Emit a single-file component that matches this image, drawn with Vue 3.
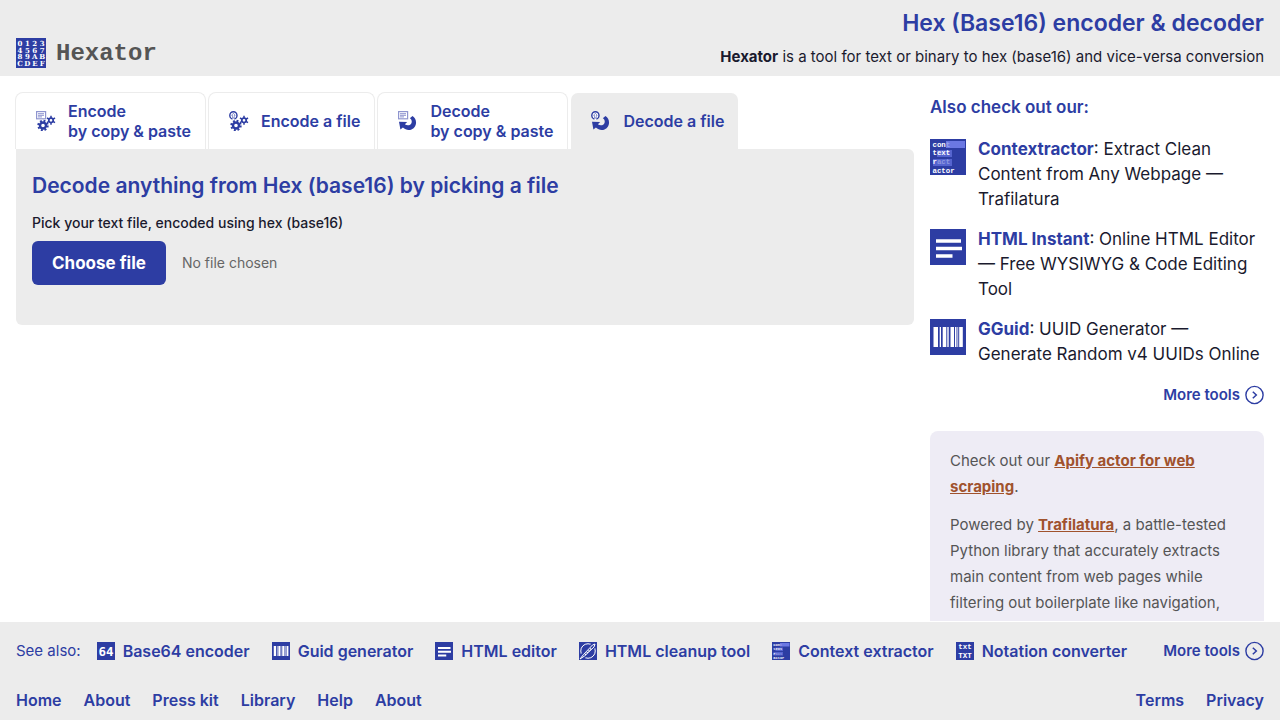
<script setup>
import { ref } from 'vue';

const activeTab = ref(3);
const fileInput = ref(null);
const fileName = ref('No file chosen');

const tabs = [
  { icon: 'encode-text', lines: ['Encode', 'by copy & paste'] },
  { icon: 'encode-file', lines: ['Encode a file'] },
  { icon: 'decode-text', lines: ['Decode', 'by copy & paste'] },
  { icon: 'decode-file', lines: ['Decode a file'] },
];

const tools = [
  { icon: 'context', name: 'Contextractor', text: 'Extract Clean Content from Any Webpage — Trafilatura' },
  { icon: 'html', name: 'HTML Instant', text: 'Online HTML Editor — Free WYSIWYG & Code Editing Tool' },
  { icon: 'guid', name: 'GGuid', text: 'UUID Generator — Generate Random v4 UUIDs Online' },
];

const seeAlso = [
  { icon: 'base64', name: 'Base64 encoder' },
  { icon: 'guid', name: 'Guid generator' },
  { icon: 'html', name: 'HTML editor' },
  { icon: 'cleanup', name: 'HTML cleanup tool' },
  { icon: 'context', name: 'Context extractor' },
  { icon: 'notation', name: 'Notation converter' },
];

const siteLinks = ['Home', 'About', 'Press kit', 'Library', 'Help', 'About'];
const legalLinks = ['Terms', 'Privacy'];
const hexRows = ['0123', '4567', '89AB', 'CDEF'];

function onFile(e) {
  const file = e.target.files[0];
  fileName.value = file ? file.name : 'No file chosen';
}
</script>

<template>
  <div class="page">
    <!-- shared icon shapes -->
    <svg class="sprite" aria-hidden="true">
      <symbol id="sheet" viewBox="0 0 20 20">
        <rect x="0.6" y="0.6" width="9" height="7.2" fill="#fff" stroke="#8f95cf" stroke-width="1.2" />
        <path d="M2 2.7h6M2 4.3h6M2 5.9h4" stroke="#7f86c9" stroke-width="0.9" />
      </symbol>
      <symbol id="upload" viewBox="0 0 20 20">
        <circle cx="4.4" cy="4.4" r="3.6" fill="#fff" stroke="#2d3da3" stroke-width="1.4" />
        <path d="M4.4 2.2L2.6 4.4h.9v2.400h1.800V4.400h.9z" fill="#fff" stroke="#2d3da3" stroke-width="0.5" />
        <path d="M3.400 7.400h2v1.600h-2z" fill="#fff" />
      </symbol>
      <symbol id="gears" viewBox="0 0 20 20">
        <circle cx="7" cy="14.5" r="3" fill="none" stroke="#2d3da3" stroke-width="2.4" />
        <circle cx="7" cy="14.5" r="4.7" fill="none" stroke="#2d3da3" stroke-width="2" stroke-dasharray="1.9 1.79" />
        <circle cx="15" cy="9.3" r="2.2" fill="none" stroke="#2d3da3" stroke-width="1.7" />
        <path d="M15 4.800v2.200M15 11.6v2.200M11 7l2 1.200M17 10.400l2 1.200M19 7l-2 1.200M13 10.400l-2 1.200" stroke="#2d3da3" stroke-width="1.5" />
      </symbol>
      <symbol id="return" viewBox="0 0 20 20">
        <path d="M1 10.800l8.200.3-2.300 2.200c2.300 1.700 5.800 1.200 6.600-1.400.7-2.200-.2-3.800-1.700-4.600L14.500 5c2.700 2 4 4.600 3.400 8-1 5.800-8.300 8.300-13 3.600l-2.500 2z" fill="#2d3da3" />
      </symbol>

      <symbol id="encode-text" viewBox="0 0 20 20"><use href="#sheet" /><use href="#gears" /></symbol>
      <symbol id="encode-file" viewBox="0 0 20 20"><use href="#upload" /><use href="#gears" /></symbol>
      <symbol id="decode-text" viewBox="0 0 20 20"><use href="#sheet" /><use href="#return" /></symbol>
      <symbol id="decode-file" viewBox="0 0 20 20"><use href="#upload" /><use href="#return" /></symbol>

      <symbol id="context" viewBox="0 0 36 36">
        <rect width="36" height="36" fill="#2d3da3" />
        <rect x="16" y="2" width="19" height="7" fill="#6b78e3" />
        <rect x="7" y="11" width="15" height="7" fill="#5564cf" />
        <rect x="3" y="20" width="19" height="7" fill="#5564cf" />
        <g font-family="Liberation Mono, monospace" font-size="7.4" font-weight="700" fill="#fff">
          <text x="2.5" y="7.5">con<tspan fill="#9aa2e8">t</tspan></text>
          <text x="2.5" y="16.3">text</text>
          <text x="2.5" y="25.2">r<tspan fill="#8f98e0">act</tspan></text>
          <text x="2.5" y="34">actor</text>
        </g>
      </symbol>
      <symbol id="html" viewBox="0 0 36 36">
        <rect width="36" height="36" fill="#2d3da3" />
        <path d="M6 12h25M6 19.5h26M6 27h16.5" stroke="#fff" stroke-width="3.6" />
      </symbol>
      <symbol id="guid" viewBox="0 0 36 36">
        <rect width="36" height="36" fill="#2d3da3" />
        <path d="M3.500 8H8v20H3.500zM9.700 8H11v20H9.700zM12.700 8h3.600v20h-3.600zM17.300 8h1.400v20h-1.400zM20.500 8H24v20h-3.500zM25 8h1.500v20H25zM27.400 8h.8v20h-.8zM29.200 8h3.600v20h-3.600z" fill="#fff" />
      </symbol>
      <symbol id="base64" viewBox="0 0 36 36">
        <rect width="36" height="36" fill="#2d3da3" />
        <text x="18" y="27" text-anchor="middle" font-family="DejaVu Sans Mono, monospace" font-size="25" font-weight="700" fill="#fff">64</text>
      </symbol>
      <symbol id="cleanup" viewBox="0 0 36 36">
        <rect width="36" height="36" fill="#2d3da3" />
        <circle cx="18" cy="18" r="14.5" fill="none" stroke="#fff" stroke-width="2" />
        <path d="M4 32L32 4" stroke="#2d3da3" stroke-width="11" />
        <path d="M2 34l7-9L27 6l5-2-2 6-19 18z" fill="none" stroke="#fff" stroke-width="2" />
        <path d="M12 26L25 12" stroke="#fff" stroke-width="2.5" stroke-dasharray="3 2" />
      </symbol>
      <symbol id="notation" viewBox="0 0 36 36">
        <rect width="36" height="36" fill="#2d3da3" />
        <g font-family="Liberation Mono, monospace" font-size="15" font-weight="700" fill="#fff" text-anchor="middle">
          <text x="18" y="14">txt</text>
          <text x="18" y="31">TXT</text>
        </g>
      </symbol>
      <symbol id="more" viewBox="0 0 20 20">
        <circle cx="10.500" cy="10" r="8.600" fill="none" stroke="#2d3da3" stroke-width="1.4" />
        <path d="M8.800 6.8l3.500 3.2-3.500 3.2" fill="none" stroke="#2d3da3" stroke-width="1.5" />
      </symbol>
    </svg>

    <header class="header">
      <a class="logo" href="#">
        <svg class="logo-mark" viewBox="0 0 30 30" aria-hidden="true">
          <rect width="30" height="30" fill="#2d3da3" />
          <g v-for="(row, r) in hexRows" :key="row">
            <text v-for="(ch, c) in row" :key="ch" class="hex" :x="4 + c * 7.4" :y="7.6 + r * 6.9">{{ ch }}</text>
          </g>
        </svg>
        <span class="logo-text">Hexator</span>
      </a>
      <div class="intro">
        <h1>Hex (Base16) encoder &amp; decoder</h1>
        <p><strong>Hexator</strong> is a tool for text or binary to hex (base16) and vice-versa conversion</p>
      </div>
    </header>

    <div class="content">
      <main class="main">
        <nav class="tabs">
          <button
            v-for="(tab, i) in tabs"
            :key="tab.icon"
            type="button"
            class="tab"
            :class="{ active: activeTab === i }"
            @click="activeTab = i"
          >
            <svg class="tab-icon" aria-hidden="true"><use :href="'#' + tab.icon" /></svg>
            <span class="tab-label">
              <span v-for="line in tab.lines" :key="line" class="tab-line">{{ line }}</span>
            </span>
          </button>
        </nav>
        <section class="panel">
          <h2>Decode anything from Hex (base16) by picking a file</h2>
          <label class="pick-label" for="file">Pick your text file, encoded using hex (base16)</label>
          <div class="picker">
            <input id="file" ref="fileInput" type="file" hidden @change="onFile">
            <button type="button" class="choose" @click="fileInput.click()">Choose file</button>
            <span class="file-name">{{ fileName }}</span>
          </div>
        </section>
      </main>

      <aside class="aside">
        <h3>Also check out our:</h3>
        <ul class="tools">
          <li v-for="tool in tools" :key="tool.name" class="tool">
            <svg class="tool-icon" aria-hidden="true"><use :href="'#' + tool.icon" /></svg>
            <p><a href="#">{{ tool.name }}</a>: {{ tool.text }}</p>
          </li>
        </ul>
        <a class="more" href="#">More tools <svg class="more-icon" aria-hidden="true"><use href="#more" /></svg></a>
        <div class="note">
          <p>Check out our <a href="#">Apify actor for web scraping</a>.</p>
          <p>Powered by <a href="#">Trafilatura</a>, a battle-tested Python library that accurately extracts main content from web pages while filtering out boilerplate like navigation,</p>
        </div>
      </aside>
    </div>

    <footer class="footer">
      <div class="see-also">
        <span class="see-label">See also:</span>
        <a v-for="item in seeAlso" :key="item.name" class="see-link" href="#">
          <svg class="see-icon" aria-hidden="true"><use :href="'#' + item.icon" /></svg>{{ item.name }}
        </a>
        <a class="more end" href="#">More tools <svg class="more-icon" aria-hidden="true"><use href="#more" /></svg></a>
      </div>
      <nav class="site-nav">
        <a v-for="(link, i) in siteLinks" :key="i" href="#">{{ link }}</a>
        <span class="legal end">
          <a v-for="link in legalLinks" :key="link" href="#">{{ link }}</a>
        </span>
      </nav>
    </footer>
  </div>
</template>

<style>
body {
  margin: 0;
  background: #fff;
}
</style>

<style scoped>
.page {
  display: flex;
  flex-direction: column;
  height: 100vh;
  font-family: Inter, "Liberation Sans", sans-serif;
  font-size: 16px;
  line-height: 20px;
  color: #1a1a2e;
}

.page * {
  box-sizing: border-box;
}

.sprite {
  display: none;
}

h1, h2, h3, p, ul {
  margin: 0;
  padding: 0;
}

a {
  color: #2d3da3;
  font-weight: 600;
  text-decoration: none;
}

.header {
  display: flex;
  justify-content: space-between;
  align-items: flex-end;
  padding: 8px 16px;
  background: #ececec;
}

.logo {
  display: flex;
  align-items: flex-end;
  gap: 10px;
}

.logo-mark {
  width: 30px;
  height: 30px;
}

.hex {
  font-family: "DejaVu Serif", "Liberation Serif", serif;
  font-size: 7px;
  text-anchor: middle;
  fill: #fff;
}

.logo-text {
  font-family: "Courier New", "Liberation Mono", monospace;
  font-size: 24px;
  line-height: 28px;
  font-weight: 700;
  color: #555;
}

.intro {
  text-align: right;
}

h1 {
  font-size: 23px;
  line-height: 30px;
  font-weight: 600;
  color: #2d3da3;
}

.intro p {
  margin-top: 8px;
  font-size: 15px;
  line-height: 22px;
}

.content {
  display: flex;
  flex: 1;
  gap: 16px;
  min-height: 0;
  padding: 16px 16px 0;
  overflow: hidden;
}

.main {
  flex: 1;
  min-width: 0;
}

.tabs {
  display: flex;
  gap: 2px;
  margin-left: -1px;
}

.tab {
  display: flex;
  align-items: center;
  gap: 12px;
  min-height: 57px;
  padding: 0 14px 0 20px;
  border: 1px solid #ececec;
  border-bottom: 0;
  border-radius: 8px 8px 0 0;
  background: #fff;
  background-clip: padding-box;
  color: #2d3da3;
  font-family: inherit;
  font-size: 16px;
  line-height: 20px;
  font-weight: 600;
  text-align: left;
  cursor: pointer;
}

.tab.active {
  border-color: transparent;
  background-color: #ececec;
}

.tab-icon {
  width: 20px;
  height: 20px;
}

.tab-line {
  display: block;
}

.panel {
  padding: 20px 16px 40px;
  border-radius: 0 6px 6px 6px;
  background: #ececec;
}

h2 {
  font-size: 21px;
  line-height: 34px;
  font-weight: 600;
  color: #2d3da3;
}

.pick-label {
  display: block;
  margin: 10px 0 8px;
  font-size: 14px;
  line-height: 20px;
  font-weight: 500;
}

.picker {
  display: flex;
  align-items: center;
  gap: 16px;
}

.choose {
  padding: 10px 20px;
  border: 0;
  border-radius: 6px;
  background: #2d3da3;
  color: #fff;
  font-family: inherit;
  font-size: 17px;
  line-height: 24px;
  font-weight: 700;
  cursor: pointer;
}

.file-name {
  font-size: 14px;
  line-height: 22px;
  color: #666;
}

.aside {
  flex: 0 0 334px;
}

h3 {
  margin-bottom: 15px;
  font-size: 17px;
  line-height: 30px;
  font-weight: 600;
  color: #2d3da3;
}

.tools {
  display: flex;
  flex-direction: column;
  gap: 15px;
  list-style: none;
}

.tool {
  display: flex;
  gap: 12px;
  font-size: 17px;
  line-height: 25px;
}

.tool a,
.note a {
  font-weight: 700;
}

.tool-icon {
  flex: none;
  width: 36px;
  height: 36px;
  margin-top: 2px;
}

.more {
  display: flex;
  justify-content: flex-end;
  align-items: center;
  gap: 4px;
  font-size: 15px;
}

.aside .more {
  margin-top: 18px;
}

.more-icon {
  width: 20px;
  height: 20px;
}

.note {
  display: flex;
  flex-direction: column;
  gap: 12px;
  margin-top: 26px;
  padding: 17px 20px;
  border-radius: 8px;
  background: #eeecf5;
  color: #555;
  font-size: 15px;
  line-height: 26px;
}

.note a {
  color: #a0522d;
  text-decoration: underline;
}

.footer {
  padding: 16px 16px 8px;
  border-top: 1px solid #fff;
  background: #ececec;
}

.see-also {
  display: flex;
  align-items: center;
  gap: 22px;
  min-height: 26px;
  color: #2d3da3;
}

.see-label {
  margin-right: -6px;
  font-size: 15px;
}

.see-link {
  display: flex;
  align-items: center;
  gap: 8px;
}

.see-icon {
  width: 18px;
  height: 18px;
}

.site-nav {
  display: flex;
  gap: 22px;
  margin-top: 24px;
  line-height: 24px;
}

.legal {
  display: flex;
  gap: 22px;
}

.end {
  margin-left: auto;
}
</style>
